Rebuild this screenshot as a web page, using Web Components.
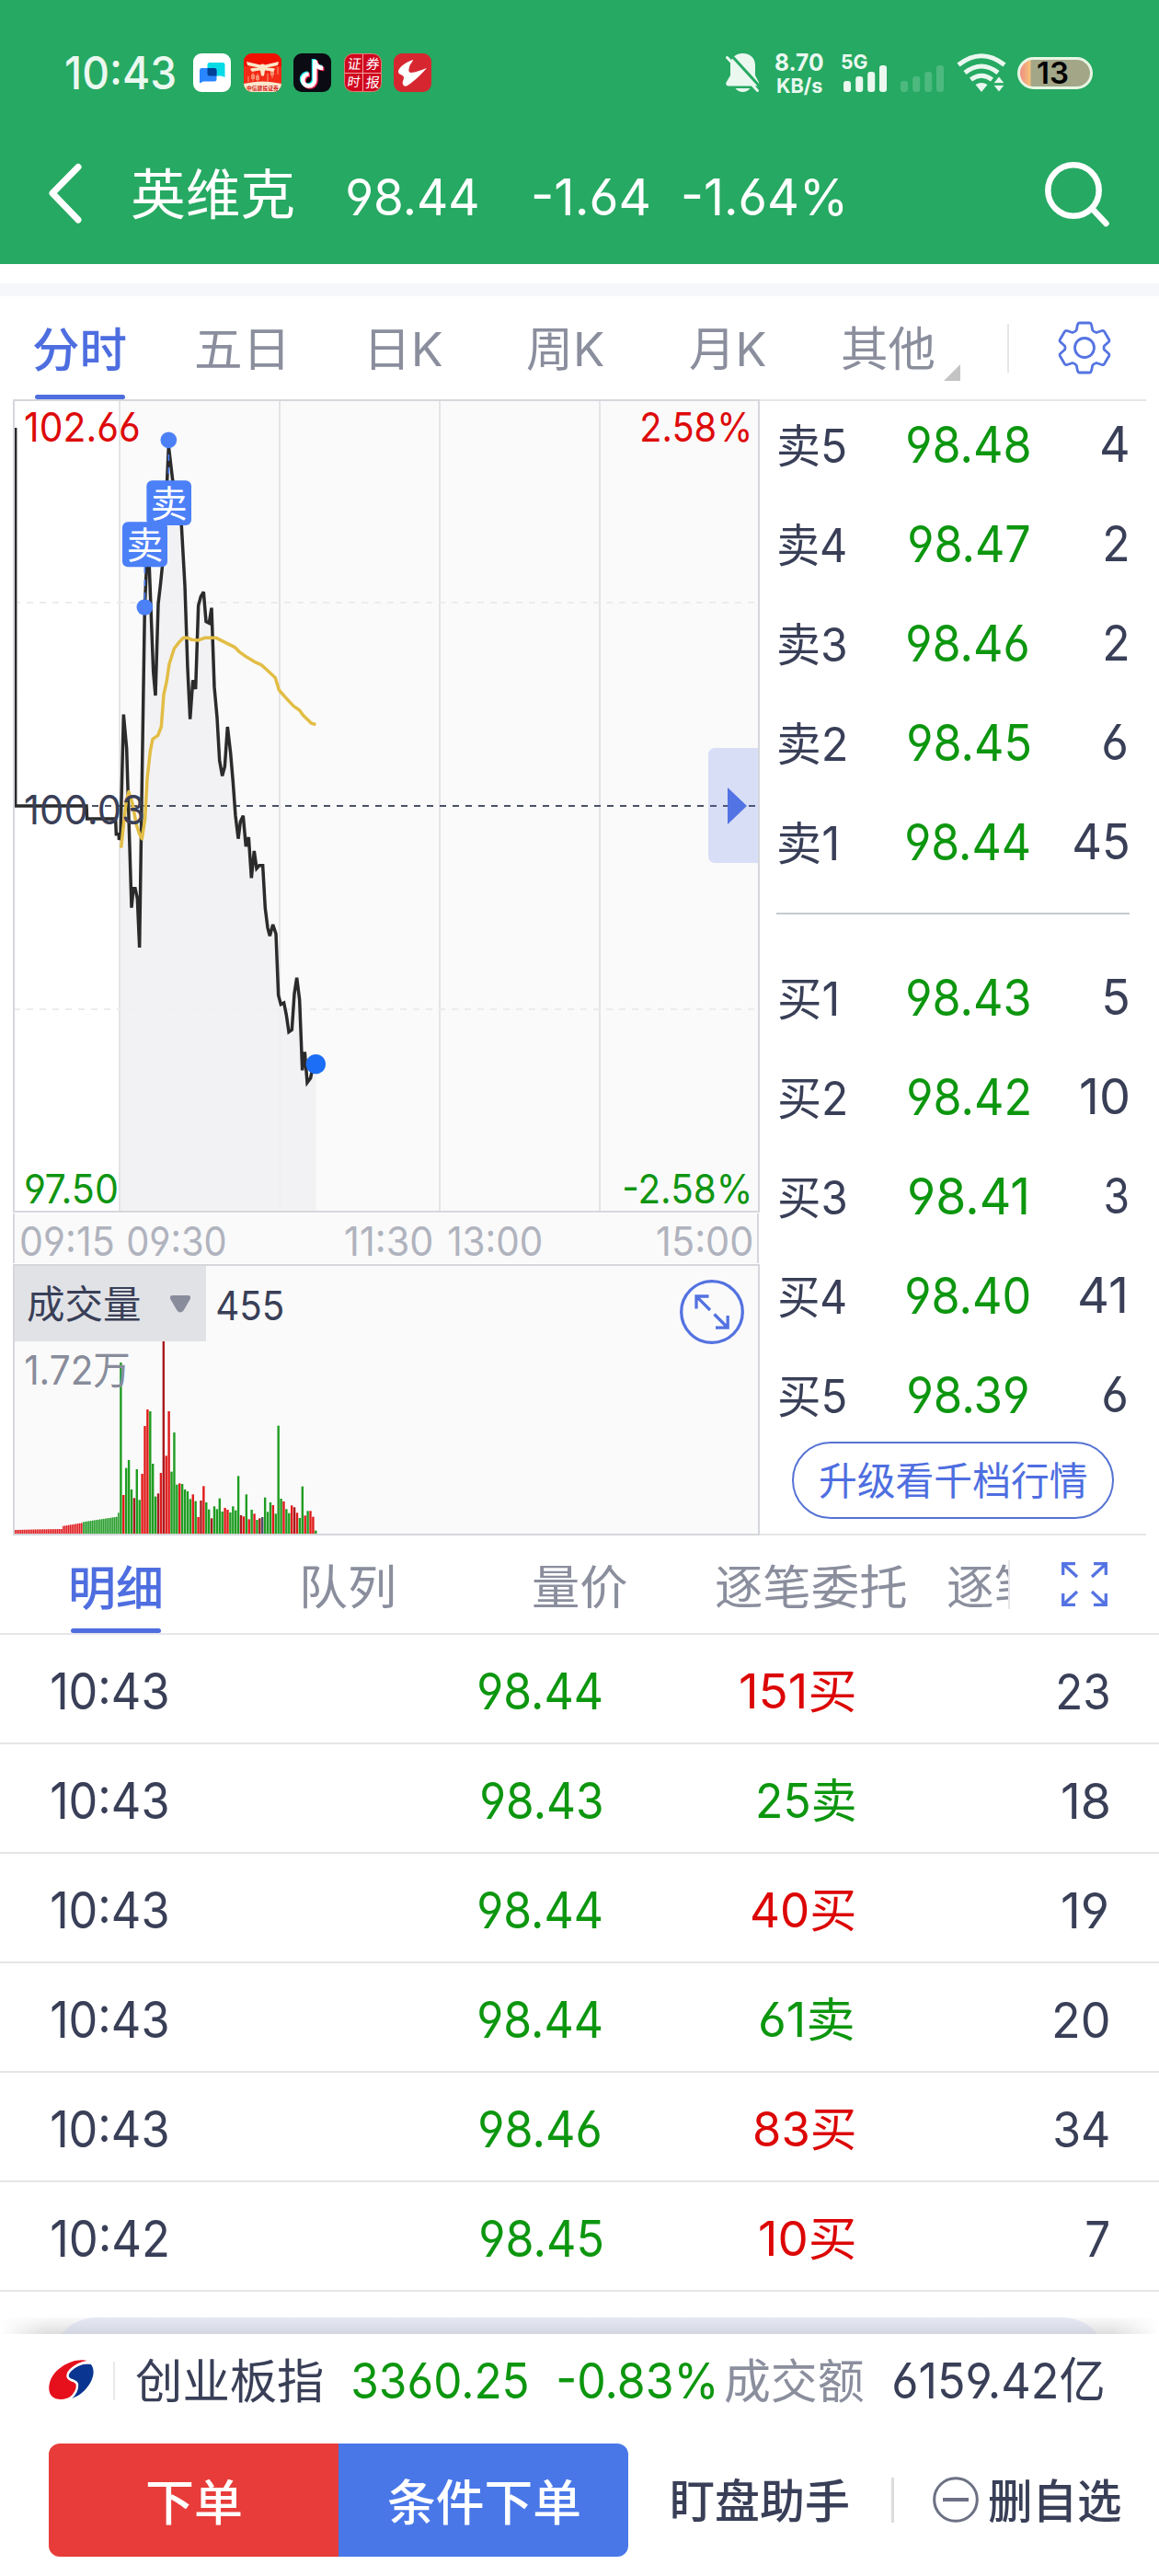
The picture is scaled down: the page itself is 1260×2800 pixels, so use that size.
<!DOCTYPE html>
<html lang="zh-CN">
<head>
<meta charset="utf-8">
<title>英维克 分时</title>
<style>
html,body{margin:0;padding:0;background:#fff}
body{width:1260px;height:2800px;overflow:hidden;font-family:Inter,"Noto Sans CJK SC",sans-serif;color:#393f57}
</style>
</head>
<body>
<stock-page></stock-page>
<script>
const FONT = 'Inter,"Noto Sans CJK SC",sans-serif';
const pen = document.createElement('canvas').getContext('2d');

/* Registers an element whose shadow root holds the given css and markup. */
function component(name, css, render) {
  customElements.define(name, class extends HTMLElement {
    connectedCallback() {
      if (this.shadowRoot) return;
      this.attachShadow({mode: 'open'}).innerHTML =
        `<style>:host{display:block;box-sizing:border-box}*{box-sizing:border-box}svg{display:block;flex:none}${css}</style>` + render(this);
    }
  });
}

/* A label whose visible glyphs span exactly `w` pixels; `gap` is the space before it. */
customElements.define('ink-text', class extends HTMLElement {
  connectedCallback() {
    if (this.shadowRoot) return;
    const n = k => Number(this.getAttribute(k) || 0);
    const w = n('w'), s = n('s') || 50, wt = n('wt') || 400;
    pen.font = `${wt} ${s}px ${FONT}`;
    const m = pen.measureText(this.textContent);
    const k = w / (m.actualBoundingBoxLeft + m.actualBoundingBoxRight);
    this.attachShadow({mode: 'open'}).innerHTML = `<style>
      :host{display:block;flex:none;width:${w}px;height:${s}px;margin-left:${n('gap')}px;margin-top:${n('dy')}px;
        font:${wt} ${s}px/${s}px ${FONT};font-feature-settings:"cv03","cv04";white-space:nowrap;color:${this.getAttribute('c') || 'inherit'}}
      span{display:block;width:max-content;transform-origin:0 0;transform:translateX(${m.actualBoundingBoxLeft * k}px) scaleX(${k})}
    </style><span><slot></slot></span>`;
  }
});

const T = (t, w, s, gap = 0, c = '', wt = 400, dy = 0) =>
  `<ink-text w="${w}" s="${s}" gap="${gap}" c="${c}" wt="${wt}" dy="${dy}">${t}</ink-text>`;

component('app-icons', ':host{display:flex;gap:13.6px;margin-left:20px}', () => `
<svg width="41" height="42" viewBox="0 0 41 42"><rect width="41" height="42" rx="9" fill="#fff"/><path d="M18 10h14a2.500 2.500 0 0 1 2.500 2.500V26l-4-1.500H18a2.500 2.500 0 0 1-2.500-2.500v-9.500A2.500 2.500 0 0 1 18 10z" fill="#06dbe6"/><path d="M9 16h14a2.500 2.500 0 0 1 2.500 2.500V28a2.500 2.500 0 0 1-2.500 2.500H11L7 32.500V18.500A2.500 2.500 0 0 1 9 16z" fill="#2a86ff"/><path d="M15.500 16H23a2.500 2.500 0 0 1 2.500 2.500v6h-7.500a2.500 2.500 0 0 1-2.500-2.500z" fill="#023f96"/></svg>
<svg width="41" height="42" viewBox="0 0 41 42"><defs><clipPath id="r"><rect width="41" height="42" rx="9"/></clipPath></defs><g clip-path="url(#r)"><rect width="41" height="42" fill="#f32a16"/><rect width="41" height="14" fill="#f01000"/><path d="M0 33Q20 28 41 33V42H0z" fill="#fbe9cf"/><g stroke="#f88b6e" stroke-width="1.200"><path d="M5 25v6M10 21v9M15 22v9M31 17v10M37 15v8M26 22v9"/></g><g fill="#f88b6e"><rect x="8" y="23" width="4" height="5"/><rect x="13" y="24" width="4" height="5"/><rect x="29" y="19" width="4" height="5"/></g><path d="M3 9l15 3.500q2.500-2 5 0L38 9l-1 4-12 2.500q7 0 9 1.500l-2 3q-5-1.500-9-1.500l-1 6h-3l-1-6q-4 0-9 1.500l-2-3q2-1.500 9-1.500L4 13z" fill="#fce6c8"/></g><text x="3" y="39.500" font-family="Noto Sans CJK SC,sans-serif" font-weight="700" font-size="5.800" fill="#d2241b">中信建投证券</text></svg>
<svg width="41" height="42" viewBox="0 0 41 42"><rect width="41" height="42" rx="9" fill="#0b0b14"/><g fill="none" stroke-width="4.500"><path d="M22 6v22a6.500 6.500 0 1 1-6.500-6.500M22 7c1 5 4 8 9 8" stroke="#22e5e8"/><path d="M24.500 8v22a6.500 6.500 0 1 1-6.500-6.500M24.500 9c1 5 4 8 9 8" stroke="#f5244d"/><path d="M23.200 7v22a6.500 6.500 0 1 1-6.500-6.500M23.200 8c1 5 4 8 9 8" stroke="#fff"/></g></svg>
<svg width="41" height="42" viewBox="0 0 41 42"><rect x=".5" y=".5" width="40" height="41" rx="9" fill="#d0061f" stroke="#dd7c70"/><path d="M20.500 1v40M1 21.500h39" stroke="#f0a8a0"/><g font-family="Noto Sans CJK SC,sans-serif" font-size="15" fill="#fff"><text transform="translate(3 17) skewX(-8)">证</text><text transform="translate(23 17) skewX(-8)">券</text><text transform="translate(3 36) skewX(-8)" font-size="14">时</text><text transform="translate(23 36.500) skewX(-8)">报</text></g></svg>
<svg width="41" height="42" viewBox="0 0 41 42"><rect width="41" height="42" rx="9" fill="#d62730"/><path d="M21 7C14 9 5 15 5 20c0 3.500 6 3 6 6.500 0 2.500-2 4-1 7 .5 1.500 1.500 2.500 4 2C19 33 28 25 36 16c-6 2-13 5-17 5-3 0-3-3-2-6 1-4 4-6 4-8z" fill="#fff"/></svg>`);

const bars = (o) => `<svg width="47" height="42" viewBox="0 0 47 42" fill="#eaf8f0" fill-opacity="${o}"><rect y="30" width="8" height="12" rx="3"/><rect x="13.200" y="25" width="8" height="17" rx="3"/><rect x="26.200" y="20" width="8" height="22" rx="3"/><rect x="39" y="13" width="8" height="29" rx="3"/></svg>`;

component('status-bar', `
:host{display:flex;align-items:center;height:158px;color:#eaf8f0}
.push{margin-left:320px}.col{display:flex;flex-direction:column;margin-left:17px;height:42px}
.sig{display:grid;width:49px;margin-left:20px}.sig>*{grid-area:1/1}.sig>svg{justify-self:end}
.dim{margin-left:15px}.wifi{margin-left:14px}
.bat{margin-left:12px;width:82px;height:35px;border:3px solid #e8f5e4;border-radius:18px;background:linear-gradient(90deg,#ef8e83 0,#f7c17a 11px,#a3a788 12px);display:flex;align-items:center;color:#000}
`, () => `${T('10:43', 118.5, 49, 71.5, '', 500)}<app-icons></app-icons>
<svg class="push" width="37" height="42" viewBox="0 0 37 42"><g fill="#eaf8f0"><path d="M18.500 0C27 0 32 5.500 32 13v11l4 7.500q1 4-2.500 4H3q-3.500 0-2.500-4L5 24V13C5 5.500 10 0 18.500 0z"/><path d="M10.500 38h16c-4 5.300-12 5.300-16 0z"/></g><path d="M5 1L37 36" stroke="#26a962" stroke-width="3"/><path d="M1.500 4.500L34.500 40.500" stroke="#eaf8f0" stroke-width="3" stroke-linecap="round"/></svg>
<div class="col">${T('8.70', 52, 26, 0, '', 700, -3.5)}${T('KB/s', 49, 22, 2, '', 700, 1.5)}</div>
<div class="sig">${T('5G', 28, 22, 0, '', 700, -2)}${bars(1)}</div><div class="dim">${bars(.2)}</div>
<svg class="wifi" width="54" height="42" viewBox="0 0 54 42"><g fill="none" stroke="#eaf8f0" stroke-width="5"><path d="M2 12.500Q27-7 52 12.500M9 21Q27 7 45 21M15.500 28.500Q27 20 38.500 28.500"/></g><path d="M20.500 34q6.500-4 13 0l-6.500 8z" fill="#eaf8f0"/><path d="M46 25l6 7.500H40zM46 42l6-7.500H40z" fill="#eaf8f0" stroke="#26a962" stroke-width=".8"/></svg>
<div class="bat">${T('13', 33, 33, 18.5, '', 600)}</div>`);

component('quote-header', `:host{display:flex;align-items:center;height:129px;padding-bottom:22px;color:#fff}.s{margin-left:217px;margin-top:-2px}`, () => `
<svg style="margin-left:52px;margin-top:-3px" width="38" height="66" viewBox="0 0 38 66"><path d="M33 4.500L5 33 33 62" fill="none" stroke="#fff" stroke-width="7" stroke-linecap="round" stroke-linejoin="round"/></svg>
${T('英维克', 175, 59, 54)}${T('98.44', 143, 55.5, 59, '', 400, 4)}${T('-1.64', 126, 55.5, 58.5, '', 400, 4)}${T('-1.64%', 174.5, 55.5, 37.500, '', 400, 4)}
<svg class="s" width="72" height="72" viewBox="0 0 72 72" fill="none" stroke="#fff" stroke-width="6.500" stroke-linecap="round"><circle cx="32" cy="32" r="27.700"/><path d="M52.500 52L67.500 68"/></svg>`);

component('period-tabs', `
:host{height:112px;display:flex;color:#8a8e9d;align-items:center}
.on{align-self:stretch;width:98px;margin-left:38px;display:flex;flex-direction:column;justify-content:flex-end;color:#4e6ee0}
.on i{display:block;height:5px;border-radius:3px;background:#4e6ee0;margin-top:23px}
.line{width:2px;height:53px;background:#e6e6ea;margin-left:51px}.gear{margin-left:53px}.tri{margin-left:10px;margin-top:53px}
`, () => `<div class="on">${T('分时', 101, 51, -2.5, '', 500)}<i></i></div>
${T('五日', 95, 51, 76.5, '', 400, 2)}${T('日K', 77.500, 51, 95.5, '', 400, 2)}${T('周K', 83, 51, 92.5, '', 400, 2)}${T('月K', 82, 51, 94, '', 400, 2)}${T('其他', 100, 51, 84, '', 400, 2)}
<svg class="tri" width="18" height="18"><path d="M18 0v18H0z" fill="#c4c4c4"/></svg><div class="line"></div>
<svg class="gear" width="58" height="58" viewBox="-29 -29 58 58" fill="none" stroke="#5574e2" stroke-width="2.800" stroke-linejoin="round"><circle r="10.500"/><path d="M-5.500-27h11q1.500 0 2 1.800l1.200 6q.8 1.500 4.300 2.700l6-2q1.700-.5 2.600 1l5 8.500q.8 1.500-.4 2.700l-4.800 4.300q-.7 2 0 4l4.800 4.300q1.200 1.200.4 2.700l-5 8.500q-.9 1.500-2.600 1l-6-2q-3.500 1.200-4.300 2.700l-1.200 6q-.5 1.800-2 1.800h-11q-1.500 0-2-1.800l-1.200-6q-.8-1.500-4.300-2.700l-6 2q-1.700.5-2.600-1l-5-8.500q-.8-1.500.4-2.700l4.800-4.300q.7-2 0-4l-4.800-4.300q-1.200-1.200-.4-2.700l5-8.500q.9-1.500 2.600-1l6 2q3.500-1.200 4.300-2.700l1.200-6q.5-1.800 2-1.800z"/></svg>`);

/* Plot units are thirds of a pixel. */
const PRICE = '50,105 50,1338 282,1338 284,1380 377,1380 379,1430 388,1430 388,1448 393,1440 403,1040 413,1150 422,1440 429,1670 435,1607 441,1607 448,1640 455,1800 462,1330 472,690 482,470 487,560 500,900 507,978 516,680 524,610 530,550 545,275 550,165 563,275 592,425 603,620 612,890 620,1055 629,928 638,957 647,685 655,655 664,640 672,737 682,742 690,692 699,950 708,1050 716,1190 725,1240 733,1210 742,1080 752,1165 760,1260 768,1370 777,1445 784,1390 793,1370 802,1470 811,1440 820,1573 829,1485 837,1542 846,1532 857,1532 865,1672 873,1735 880,1762 890,1725 900,1755 908,1955 916,1985 926,1980 934,2020 942,2075 952,2068 960,1950 968,1898 977,1970 986,2200 994,2140 1002,2240 1013,2225 1020,2190 1030,2180';
const AVG = '395,1475 403,1400 412,1320 420,1292 432,1330 445,1400 455,1430 463,1445 473,1380 480,1250 490,1160 498,1120 515,1108 526,1080 534,975 543,935 552,875 568,825 585,803 598,790 612,790 625,796 645,798 668,790 705,790 735,805 765,820 780,835 805,853 830,868 852,878 880,903 898,920 910,960 930,983 958,1013 977,1026 988,1042 1015,1068 1030,1073';
const AREA = '393,2658 ' + PRICE.slice(PRICE.indexOf('393,1440')) + ' 1030,2658';

/* Plot on the bottom layer, axis labels beneath the price line, both sharing one grid cell. */
component('price-chart', `:host{width:812px;height:884px;display:grid;grid-template:884px/812px}
:host>*{grid-area:1/1}.labels{display:flex;flex-direction:column;justify-content:space-between;padding:9px 12px 3.500px 13.500px}
.labels>div{display:flex;justify-content:space-between}.mid{margin-bottom:-4px}`, () => `
<svg width="812" height="884" viewBox="14 434 812 884">
<rect x="14" y="434" width="812" height="884" fill="#fff"/><rect x="130" y="436" width="694" height="880" fill="#fafafa"/>
<path d="M130 436v880M304 436v880M478 436v880M652 436v880" stroke="#e4e4e7" stroke-width="2"/>
<path d="M15 655h809M15 1097h809" stroke="#ececee" stroke-width="2" stroke-dasharray="7 7"/>
<rect x="15" y="435" width="810" height="882" fill="none" stroke="#d6d7dc" stroke-width="2"/></svg>
<div class="labels"><div>${T('102.66', 125, 43.5, 0, '#dd0a0a')}${T('2.58%', 116, 43.5, 0, '#dd0a0a')}</div>
<div class="mid">${T('100.03', 128, 43.5)}</div>
<div>${T('97.50', 101, 43.5, 0, '#109512')}${T('-2.58%', 135, 43.5, 0, '#109512')}</div></div>
<svg width="812" height="884" viewBox="14 434 812 884">
<defs><clipPath id="plot"><rect x="48" y="18" width="2430" height="2640"/></clipPath></defs>
<g transform="translate(0 430) scale(.33333)"><g clip-path="url(#plot)">
<polygon points="${AREA}" fill="#f0f0f3" fill-opacity=".88"/>
<path d="M48 1338H2472" stroke="#4b5167" stroke-width="5.500" stroke-dasharray="21 21"/>
<polyline points="${PRICE}" fill="none" stroke="#2b2b2b" stroke-width="10.500" stroke-miterlimit="3"/>
<polyline points="${AVG}" fill="none" stroke="#e2bd45" stroke-width="10.500" stroke-linejoin="round"/></g>
<path d="M550 150V277M472 558V690" stroke="#4c80f7" stroke-width="5" stroke-dasharray="21 21"/>
<g fill="#4c80f7"><circle cx="550" cy="145" r="26.500"/><circle cx="472" cy="690" r="26.500"/><circle cx="1030" cy="2180" r="32" fill="#1b6ef5"/>
<rect x="478" y="277" width="146" height="146" rx="18"/><rect x="399" y="412" width="147" height="147" rx="18"/></g></g>
<g fill="#fff" text-anchor="middle" font-family="Noto Sans CJK SC,sans-serif" font-size="40"><text x="183.700" y="562">卖</text><text x="157.500" y="607">卖</text></g>
<path d="M824 813h-46q-8 0-8 8v109q0 8 8 8h46z" fill="#4e6ee0" fill-opacity=".2"/><path d="M791 856l21 20-21 20z" fill="#5273e3"/>
</svg>`);

component('time-axis', `:host{width:811px;height:54px;margin:1px 0;background:#fafafa;border:solid #d6d7dc;border-width:0 2px;display:flex;align-items:center;padding-top:7px;color:#b0b3be}`, () =>
  T('09:15', 101, 43.5, 7) + T('09:30', 107, 43.5, 15) + T('11:30', 93, 43.5, 130) + T('13:00', 100, 43.5, 19) + T('15:00', 102, 43.5, 127));

const VOL = 'g363 r795 g707 g681 g777 m805 g711 g811 r726 r570 r516 g522 g693 g800 m790 r723 m294 r667 r522 g719 g591 g761 r757 g759 g777 g783 g808 r793 g815 r867 m813 r766 g819 g842 m871 g832 g841 g806 g849 r837 r843 g852 g832 g845 g733 m861 r865 g793 r874 g843 r856 g876 m871 k867 g803 g850 g819 r828 g856 g569 g807 r816 g841 g854 r829 m835 r853 g870 g767 r862 g847 r847 r866 g911'.split(' ');
const TONE = {g: '#1f9d21', r: '#e01a1a', m: '#a81a1e', k: '#4b5167'};
function volumeBars() {
  let out = '';
  for (let x = 48; x < 388; x += 6) {
    const h = x < 200 ? 12 + (x - 48) / 50 : x < 270 ? 24 + (x - 200) / 6 : x < 382 ? 38 + (x - 270) / 6.5 : 68;
    const [a, b] = x < 268 ? ['#f2777a', '#d92327'] : ['#74c476', '#2f9c33'];
    out += `<rect x="${x}" y="${921 - h}" width="6" height="${h}" fill="${a}"/><rect x="${x}" y="${921 - h}" width="3" height="${h}" fill="${b}"/>`;
  }
  VOL.forEach((v, i) => { const y = +v.slice(1); out += `<rect x="${390.500 + i * 8.71}" y="${y}" width="7.200" height="${921 - y}" fill="${TONE[v[0]]}"/>`; });
  return out;
}
component('volume-chart', `
:host{width:812px;height:295px;border:2px solid #d6d7dc;background:#fafafa;display:grid}
:host>*{grid-area:1/1}.bars{z-index:0}.ui{z-index:1;display:grid;grid-template-columns:auto 70px;justify-content:space-between;align-items:start;padding-right:15px}
.head{display:flex;align-items:center;height:82px}.pick{display:flex;align-items:center;width:208px;height:82px;background:#e1e2e6;padding-left:14px;padding-top:4px}
.pick svg{margin-left:33px;margin-top:-4px}.max{margin-top:10px}.full{margin-top:15px}`, () => `
<svg class="bars" width="808" height="291" viewBox="48 48 2424 873">${volumeBars()}</svg>
<div class="ui"><div><div class="head"><div class="pick">${T('成交量', 122, 41.5)}<svg width="22" height="19" viewBox="0 0 22 19"><path d="M3 0h16q4.500 0 2.500 4.500l-7 12q-3.500 4-7 0l-7-12Q-1.500 0 3 0z" fill="#888c9b"/></svg></div>${T('455', 71, 43.5, 12, '', 400, 5)}</div>
<div class="max">${T('1.72万', 111.500, 43.5, 11.500, '#888c9b')}</div></div>
<svg class="full" width="70" height="70" viewBox="0 0 70 70" fill="none" stroke="#5372e1" stroke-width="3.300"><circle cx="35" cy="35" r="33.300"/><path d="M18 31.500V18h13.500M18.500 18.500L33 33M37.500 37.500L52 52M39 52.200h13.200V39"/></svg></div>`);

const ROWS = {
  卖: [['卖5', '98.48', 134, 4, 28], ['卖4', '98.47', 132, 2, 24], ['卖3', '98.46', 134, 2, 24], ['卖2', '98.45', 133, 6, 26.5], ['卖1', '98.44', 135, 45, 58]],
  买: [['买1', '98.43', 134, 5, 25], ['买2', '98.42', 133, 10, 51], ['买3', '98.41', 129, 3, 24], ['买4', '98.40', 135, 41, 49], ['买5', '98.39', 133, 6, 26.5]]
};
const depth = side => ROWS[side].map(([n, p, w, q, qw]) => {
  const nw = n[1] === '1' ? 62 : 72;
  return `<div class="r">${T(n, nw, 50, 0, '', 400, 3)}<span${p === '98.41' ? ' class="in"' : ''}>${T(p, w, 54.5, 0, '#0d960f')}</span><span${q === 41 ? ' class="in"' : ''}>${T(q, qw, 54, 0, '')}</span></div>`;
}).join('');
component('order-book', `
:host{width:420px;height:1235px;border:solid #e6e6e9;border-width:2px 0;padding:0 20px 0 21px}
.r{display:grid;grid-template-columns:73px 201px 105px;height:108px;align-items:center}.r span{justify-self:end}.r .in{padding-right:3px}
hr{border:0;height:2px;background:#c6c8ce;margin:23px -2px 36px -3px}
.s{margin-top:-7px}.up{display:flex;align-items:center;justify-content:center;margin:-3px 0 0 14px;padding-top:3px;width:350px;height:84px;border:2px solid #5673d4;border-radius:42px;color:#4e6ee0}`, () =>
  `<div class="s">${depth('卖')}</div><hr>${depth('买')}<div class="up">${T('升级看千档行情', 290, 41.5)}</div>`);

component('detail-tabs', `
:host{display:flex;height:108px;align-items:center;color:#8a8e9d;border-bottom:2px solid #e6e6e9}
.on{align-self:stretch;width:98px;margin-left:77px;display:flex;flex-direction:column;justify-content:flex-end;color:#4e6ee0}
.on i{display:block;height:5px;border-radius:3px;background:#4e6ee0;margin-top:18.500px}
.cut{width:66px;margin-left:45.500px;overflow:hidden;padding:6px 0}.line{width:2px;height:53px;background:#e6e6ea}.x{margin-left:55px}`, () => `
<div class="on">${T('明细', 98, 51, 0, '', 500)}<i></i></div>${T('队列', 98, 51, 154.5, '', 400, 7)}${T('量价', 101.500, 51, 152, '', 400, 7)}${T('逐笔委托', 206.500, 51, 97, '', 400, 7)}
<div class="cut">${T('逐笔', 100, 51, 0, '', 400, 7)}</div><div class="line"></div>
<svg class="x" width="52" height="50" viewBox="0 0 52 50" fill="none" stroke="#5473e2" stroke-width="3.300"><path d="M2.700 15V2.700H16M3 3l15 14M36 2.700h13.300V15M49 3L34 17M2.700 35v12.300H16M3 47l15-14M36 47.300h13.300V35M49 47L34 33"/></svg>`);

component('tick-list', `.r{display:flex;align-items:center;height:119px;border-bottom:2px solid #e6e6e9;padding:5.500px 55px 0 55.500px}
.a{flex:0 0 600.500px;display:flex;justify-content:space-between}.b{flex:0 0 273px;display:flex;justify-content:flex-end}.c{flex:1;display:flex;justify-content:flex-end}`, () => [
  ['10:43', '98.44', 135, '151买', 124, 23, 54], ['10:43', '98.43', 132, '25卖', 105, 18, 50], ['10:43', '98.44', 135, '40买', 111, 19, 50],
  ['10:43', '98.44', 135, '61卖', 102, 20, 58], ['10:43', '98.46', 134, '83买', 108, 34, 58], ['10:42', '98.45', 133, '10买', 103, 7, 24]
].map(([t, p, pw, v, vw, q, qw]) => `<div class="r"><div class="a">${T(t, 126, 54.5)}${T(p, pw, 54.5, 0, '#0d960f')}</div><div class="b">${T(v, vw, 51.5, 0, v.endsWith('买') ? '#dc0606' : '#0d960f')}</div><div class="c">${T(q, qw, 53.5)}</div></div>`).join(''));

component('peek-card', `:host{height:46px;padding:28px 55px 0;overflow:hidden;background:linear-gradient(90deg,#fff 0,#fff0 50px,#fff0 1210px,#fff 1260px),linear-gradient(#fff 28px,#fafafa 28px,#dedede)}
div{height:100px;border-radius:50px;background:linear-gradient(#e6e8f4,#d3d5e0 18px)}`, () => '<div></div>');

component('index-strip', `:host{display:flex;align-items:center;height:100px;padding:1px 0 0 53px}.l{width:2px;height:42px;background:#e9e9ec;margin-left:21px}.g{display:flex;color:#0d960f}svg{margin-top:-2px}`, () => `
<svg width="49" height="43" viewBox="0 0 49 43"><path d="M42 1C27-3 5 9 1 25c-3 12 3 18 12 18 11 0 19-9 17-16-1-4-9-3-10-8C19 12 32 2 42 1z" fill="#e5101c"/><path d="M46 5C36 2 22 11 21 18c-.5 4 9 3 10 8 1 6-3 13-7 16C39 39 55 17 46 5z" fill="#0a3590"/><path d="M43 3C31 3 20 12 20.500 18c.5 5 10 3.500 10.500 9 .3 5-3 11-7.500 15" fill="none" stroke="#fff" stroke-width="2.500"/></svg>
<div class="l"></div>${T('创业板指', 203, 51.5, 23, '', 400, 1.5)}<div class="g">${T('3360.25', 191, 54, 33)}${T('-0.83%', 169, 54, 32)}</div>${T('成交额', 151, 51.5, 12, '#8a8e9d', 400, 1.5)}${T('6159.42亿', 235, 53.5, 33)}`);

component('action-bar', `:host{display:flex;align-items:center;height:163px;padding:0 0 3px 53px}
.b{display:flex;width:630px;height:123px;border-radius:12px;overflow:hidden;color:#fff}.b>div{flex:1;display:flex;align-items:center;justify-content:center;padding-top:8px}
.buy{background:#e73c39}.cond{background:#4977e8}.l{width:3px;height:49px;background:#dcdcdf;margin-left:47px}svg{margin-left:42px}`, () => `
<div class="b"><div class="buy">${T('下单', 102, 53, 0, '', 500)}</div><div class="cond">${T('条件下单', 208, 53, 0, '', 500)}</div></div>
${T('盯盘助手', 191.500, 49.5, 47.5, '', 500, 6)}<div class="l"></div>
<svg width="50" height="50" viewBox="0 0 50 50" fill="none" stroke="#6b7083" stroke-width="3"><circle cx="25" cy="25" r="23.300"/><path d="M11 25h28" stroke-width="4"/></svg>${T('删自选', 143, 49.5, 11, '', 500, 6)}`);

component('stock-page', `
:host{width:1260px;height:2800px;background:#fff}
header{background:#26a962}.band{height:14px;margin-top:21px;background:#f6f7fa}
.quote{display:flex;margin-left:14px;height:1235px;align-items:flex-start}
.left{width:812px}`, () => `
<header><status-bar></status-bar><quote-header></quote-header></header>
<div class="band"></div><period-tabs></period-tabs>
<div class="quote"><div class="left"><price-chart></price-chart><time-axis></time-axis><volume-chart></volume-chart></div><order-book></order-book></div>
<detail-tabs></detail-tabs><tick-list></tick-list><peek-card></peek-card><index-strip></index-strip><action-bar></action-bar>`);
</script>
</body>
</html>
